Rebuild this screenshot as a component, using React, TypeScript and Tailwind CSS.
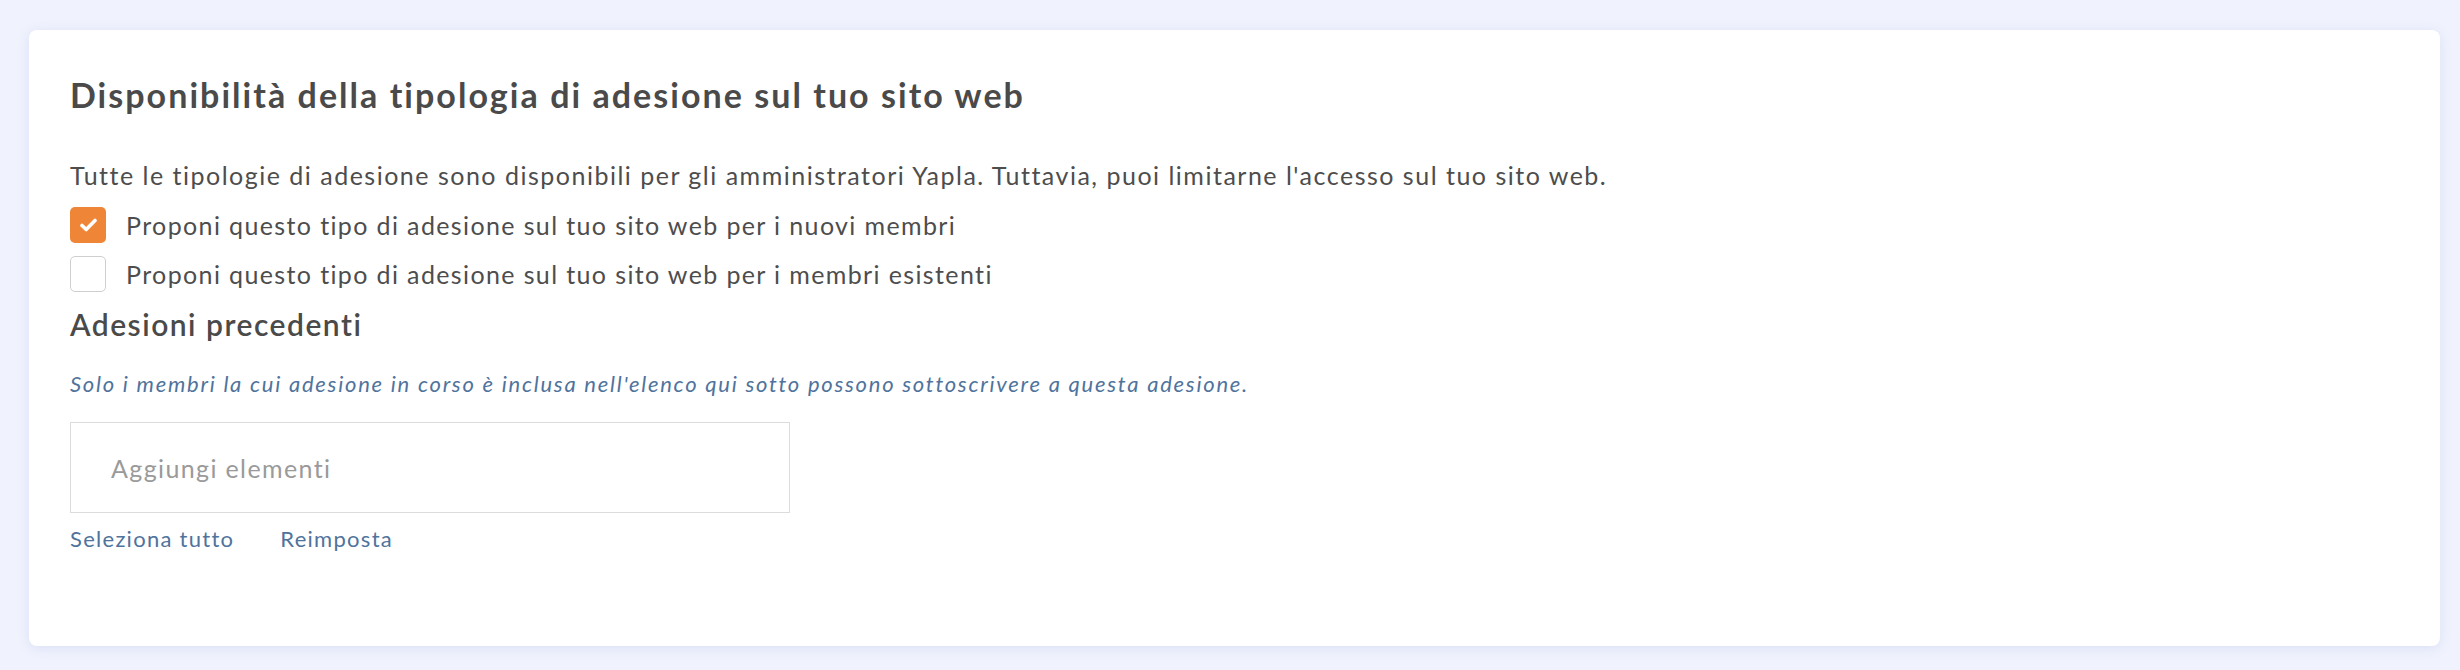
const font = { fontFamily: 'Lato, "Noto Sans", sans-serif' };

function Check({ checked, label }: { checked: boolean; label: string }) {
  return (
    <label className="flex items-center gap-[20px]">
      {checked ? (
        <span className="flex h-[36px] w-[36px] items-center justify-center rounded-[5px] bg-[#ee8537]">
          <svg width="17" height="14" viewBox="0 0 17 14">
            <path d="M2 7.5 L6.2 11.5 L15 2.5" fill="none" stroke="#fff" strokeWidth="3.6" strokeLinecap="round" strokeLinejoin="round" />
          </svg>
        </span>
      ) : (
        <span className="h-[36px] w-[36px] rounded-[5px] border border-[#cfcfcf] bg-white" />
      )}
      <span className="text-[25px] leading-[30px] tracking-[0.055em] text-[#4d4d4d]">{label}</span>
    </label>
  );
}

export default function App() {
  return (
    <div className="h-[670px] bg-[#f0f3fd] pl-[29px] pr-[20px] pt-[30px]" style={font}>
      <div className="h-[616px] rounded-[8px] bg-white pl-[41px] pt-[45px] shadow-[0_2px_12px_rgba(190,200,240,0.45)]">
        <h1 className="text-[34px] font-bold leading-[40px] tracking-[0.06em] text-[#4a4a4a]">
          Disponibilità della tipologia di adesione sul tuo sito web
        </h1>
        <p className="mt-[45px] text-[25px] leading-[30px] tracking-[0.06em] text-[#4d4d4d]">
          Tutte le tipologie di adesione sono disponibili per gli amministratori Yapla. Tuttavia, puoi limitarne l'accesso sul tuo sito web.
        </p>
        <div className="mt-[17px] flex flex-col gap-[13px]">
          <Check checked label="Proponi questo tipo di adesione sul tuo sito web per i nuovi membri" />
          <Check checked={false} label="Proponi questo tipo di adesione sul tuo sito web per i membri esistenti" />
        </div>
        <h2 className="mt-[14px] text-[30px] font-semibold leading-[36px] tracking-[0.05em] text-[#4a4a4a]">Adesioni precedenti</h2>
        <p className="mt-[29px] text-[22px] italic leading-[26px] tracking-[0.08em] text-[#4f739c]">
          Solo i membri la cui adesione in corso è inclusa nell'elenco qui sotto possono sottoscrivere a questa adesione.
        </p>
        <div className="mt-[25px] flex h-[91px] w-[720px] items-center border border-[#dcdcdc] pl-[40px]">
          <span className="text-[25px] leading-[30px] tracking-[0.055em] text-[#9a9a9a]">Aggiungi elementi</span>
        </div>
        <div className="mt-[13px] flex gap-[46px] text-[22px] leading-[26px] tracking-[0.058em] text-[#4f739c]">
          <a>Seleziona tutto</a>
          <a>Reimposta</a>
        </div>
      </div>
    </div>
  );
}
